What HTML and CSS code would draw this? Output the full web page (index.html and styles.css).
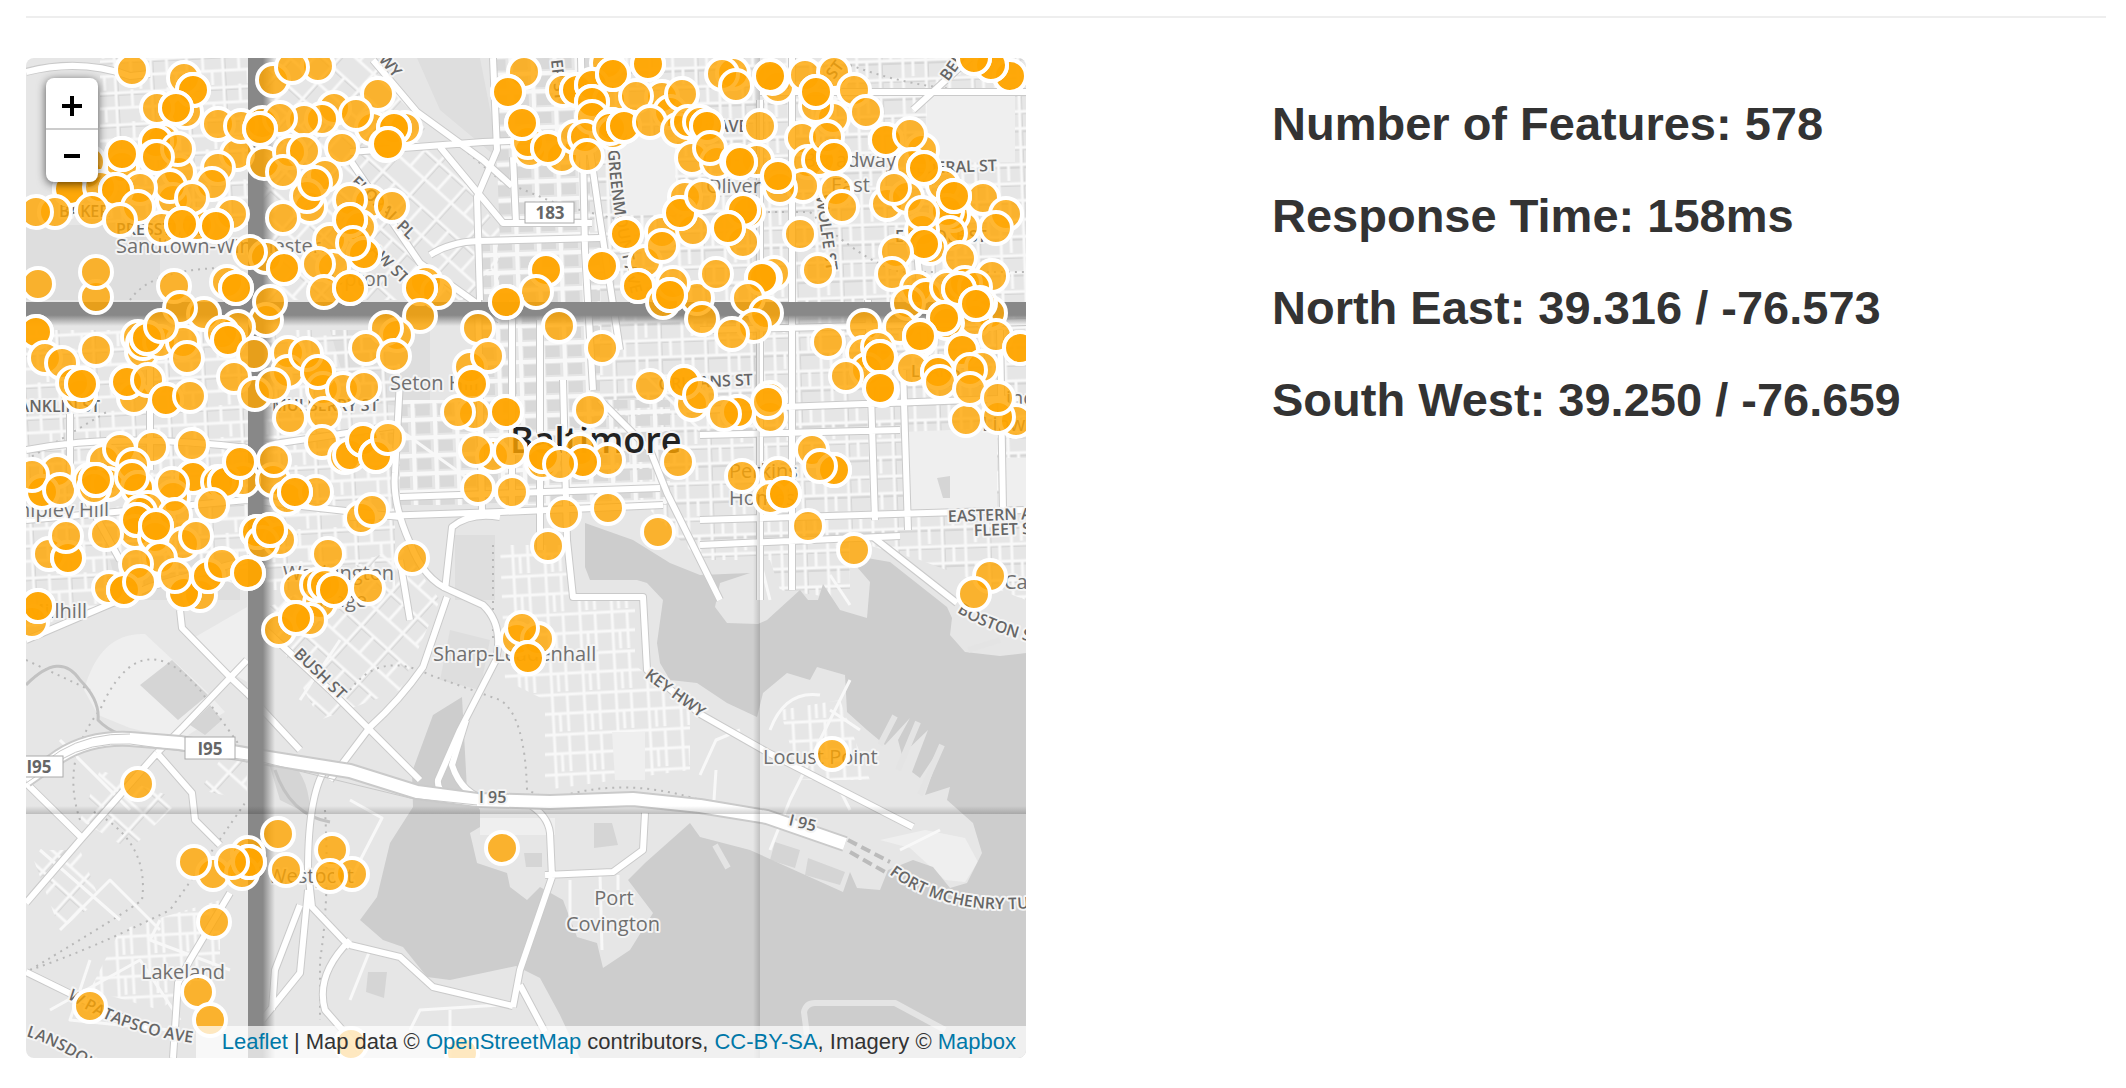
FILE: index.html
```html
<!DOCTYPE html>
<html lang="en">
<head>
<meta charset="utf-8">
<title>Baltimore features</title>
<link rel="stylesheet" href="styles.css">
</head>
<body>
<hr class="divider">
<main class="row">
  <section class="map" aria-label="Map of Baltimore">
    <svg class="map-canvas" viewBox="26 58 1000 1000" role="img" aria-label="Street map with feature markers">
      <defs>
        <pattern id="grid-east" width="46" height="36" patternUnits="userSpaceOnUse" patternTransform="rotate(-2)">
          <path class="block-edge" d="M0 4H46M4 0V36M0 22H46"/>
          <path class="street" d="M0 3H46M3 0V36M0 20H46M26 0V36M14 3V20M36 20V36"/>
        </pattern>
        <pattern id="grid-core" width="22" height="18" patternUnits="userSpaceOnUse" patternTransform="rotate(-2)">
          <rect class="block" x="5" y="5" width="14" height="11"/>
          <path class="street wide" d="M0 2H22M2 0V18"/>
        </pattern>
        <pattern id="grid-west" width="36" height="32" patternUnits="userSpaceOnUse" patternTransform="rotate(-3)">
          <path class="block-edge" d="M0 4H36M4 0V32"/>
          <path class="street" d="M0 3H36M3 0V32M0 18H36M19 0V18M28 18V32"/>
        </pattern>
        <pattern id="grid-diagonal" width="36" height="44" patternUnits="userSpaceOnUse" patternTransform="rotate(42)">
          <path class="block-edge" d="M0 4H36M4 0V44"/>
          <path class="street" d="M0 3H36M3 0V44M0 25H36M20 3V25"/>
        </pattern>
        <pattern id="grid-south" width="32" height="40" patternUnits="userSpaceOnUse" patternTransform="rotate(-3)">
          <path class="street" d="M0 3H32M3 0V40M0 22H32M18 3V40M10 22V40"/>
        </pattern>
        <linearGradient id="seam-x"><stop offset="0" stop-color="#888"/><stop offset=".55" stop-color="#888"/><stop offset="1" stop-color="#888" stop-opacity="0"/></linearGradient>
        <linearGradient id="seam-y" x2="0" y2="1"><stop offset="0" stop-color="#888"/><stop offset=".55" stop-color="#888"/><stop offset="1" stop-color="#888" stop-opacity="0"/></linearGradient>
        <linearGradient id="edge-x"><stop offset="0" stop-opacity="0"/><stop offset="1" stop-opacity=".16"/></linearGradient>
        <linearGradient id="edge-y" x2="0" y2="1"><stop offset="0" stop-opacity="0"/><stop offset="1" stop-opacity=".18"/></linearGradient>
        <g id="highways">
          <path d="M26 780L60 756Q90 737 130 739L180 743L262 757L350 771L417 792L477 800L550 802L633 799L700 806L767 817L845 844"/>
        </g>
        <g id="major-roads">
          <path d="M400 380L395 473Q392 503 410 543Q424 580 450 590L483 605Q504 625 496 660L460 730L438 780Q436 798 470 802"/>
          <path d="M466 720L452 765Q462 796 490 800M447 597L423 667Q400 700 370 727L330 780"/>
          <path d="M373 60L417 112L483 160L512 186M440 147L503 223H592M350 152L483 142L540 140"/>
          <path d="M493 58L497 150L477 197L480 300M513 157L516 223M581 58L585 250L593 390M430 255Q450 242 478 241L600 238M350 160L420 263L500 320"/>
          <path d="M563 380L567 540L573 597H643L647 670L700 714L767 752L913 827M350 517L500 512L663 505M400 497L660 488M600 400L650 450L667 493L720 600"/>
          <path d="M873 537L957 603M527 803Q548 815 550 833L552 877L520 970L513 1007M520 985L545 1032M545 875L613 872L643 850L645 813"/>
          <path d="M350 945L400 957L433 987L513 1006M157 753L82 838L26 903M26 783L82 838M157 753L192 793L195 820L220 845M230 893L190 960L178 983L173 1058M26 972L77 997L150 1030"/>
          <path d="M328 765Q308 790 308 870L312 907L350 947M308 890L300 973L262 1020M300 905L275 970L272 1010M350 940Q315 975 325 1010L360 1050"/>
          <path d="M180 610L182 628L230 677L247 693L300 750M260 625L330 690L420 780M247 660L183 727L157 753M26 640L150 587L247 560"/>
          <path d="M26 72Q80 58 130 76L150 74M26 450Q120 432 247 448L400 425M26 520L247 500L400 517M150 340V470M70 390V470L120 560"/>
          <path d="M913 110L970 58M760 92H1026M700 330L1026 322M700 410L1026 398M700 435L900 430M700 520L1026 510M700 545L900 536M792 58V590M760 100V600M868 300L875 520M903 370L908 530M1000 330L1003 510M917 250L926 360"/>
          <path d="M478 300L482 510M512 300V510M540 320V550M620 350L600 220L590 150M410 620L400 560M445 590L452 527Q470 512 500 517"/>
        </g>
        <path id="label-boston" d="M957 612Q990 634 1050 646"/>
        <path id="label-mchenry" d="M889 874Q950 920 1050 906"/>
        <path id="label-patapsco" d="M67 998Q130 1040 225 1046"/>
        <path id="label-lansdowne" d="M26 1036Q70 1050 110 1085"/>
        <path id="label-greenmount" d="M608 150Q612 220 632 296"/>
      </defs>

      <rect class="land" x="26" y="58" width="1000" height="1000"/>
      <path class="shade" d="M26 225H160V300H26ZM417 58H480L500 160L440 110ZM330 330H430V410L350 400ZM455 535H495V600H455ZM450 630L490 640L480 690L440 680ZM110 560L240 550V600H120Z"/>
      <path fill="url(#grid-west)" d="M100 58H248V225H100ZM26 330H400V500L395 510V590H262L200 575L26 630Z"/>
      <path fill="url(#grid-diagonal)" d="M262 58H373L500 230V300H262ZM262 610L400 545L440 600L400 690L320 720ZM100 770L180 800L130 850L80 820ZM30 850L80 850L100 900L60 930ZM220 760H247V800L200 790Z"/>
      <path fill="url(#grid-east)" d="M590 58H1026V600L920 560L850 540V600L780 590L770 560H700L590 450Z"/>
      <path fill="url(#grid-core)" d="M400 400H480V240H600V400H670V505H400ZM493 58H590V240H500Z"/>
      <path fill="url(#grid-south)" d="M500 545H565L575 600H635V665L690 710V770L545 790V700L505 680ZM780 710L840 700L870 780L800 780ZM120 930L220 900V960L160 1010L90 990Z"/>
      <path class="park" d="M617 137H675V215H626ZM903 432L997 428V508L908 514ZM927 97L1015 92V162L927 163ZM1005 458H1026V510H1005ZM84 690Q100 632 145 634L205 690L225 712L180 740L130 728L98 715ZM190 640L247 607V682L230 672L188 630ZM480 818H555V835H480ZM612 732H645V780H615ZM880 840L925 830L965 838L978 862L965 882L945 880L910 848Z"/>
      <path class="shade dark" d="M140 685L172 660L208 695L178 720ZM190 725L210 705L222 720L205 735ZM937 478L950 476V498H943ZM594 823H612L618 845L594 848ZM524 853H542V867H526ZM368 972H387L384 998L366 992ZM775 842L800 850L795 868L770 860ZM808 858L845 872L840 885L805 875ZM265 750Q310 760 310 815L280 800Z"/>
      <path class="water" d="M585 523L633 540L670 563L700 575L750 573L720 583L715 607L727 623L758 624L767 620L800 590L808 600H818L823 584L840 610L867 618L870 582L857 567L867 558L890 562L947 607L952 618L950 635L965 652L1000 656L1026 653V1058H580L560 1015L540 978L516 966L450 980L427 977L403 947L383 940L360 920L377 897L390 843L413 807L412 772L433 715L462 697L467 790L480 810V827L470 833L477 863L507 873L510 887L527 900L540 887L563 900L577 937L597 943L603 968L630 950L653 913L628 880L645 863L690 823L700 837L750 850L843 892L850 872L857 888L880 890L888 870L913 860L933 867L950 888L967 883L982 853L973 823L947 800L950 787L925 795L942 745L920 778L912 772L928 730L902 755L898 740L910 718L885 745L867 730L847 712L845 675L817 667L810 680L787 673L763 693L757 717L727 703L697 683L670 680L660 663L657 643L663 600L647 583L637 580L590 580L585 567Z"/>
      <path class="pier" d="M807 1035L804 1012Q806 1003 815 1003H895L945 1030M895 716L880 745M918 722L898 770M942 745L920 795M1000 640L968 650M715 845L728 868"/>
      <path class="rail" d="M80 820Q60 760 100 710Q140 620 200 690L250 760M30 970Q130 910 142 900Q150 840 90 810M30 970Q90 950 170 910Q220 840 247 800M26 660L90 690M26 460L110 410M130 300Q150 270 220 268M420 112L500 180L560 205L640 225M740 212H810Q860 260 900 272H1026M850 65Q930 95 1026 92M350 690Q380 650 430 675L500 700Q525 715 527 790L550 800Q620 775 700 800M325 810Q330 900 320 960V1020M493 545V640"/>
      <path class="creek" d="M26 685Q60 650 80 680Q100 700 98 720Q115 738 150 740M275 770Q290 815 330 822"/>
      <path class="thin-road" d="M60 740L130 810M40 850L120 920M60 930L110 880L160 930M50 1010L140 960L180 1020M160 920L150 940L230 970M90 960L70 1020L170 1030M300 700L340 640M350 800L382 818L350 880M370 950L350 1000M410 1030L420 1010L500 1005M450 1010V1058M570 880V930M600 875L602 950M618 875V890M700 775L716 740L740 730M716 770L714 800M770 730Q785 690 820 695M850 680L790 800L770 850M830 710L860 730M840 790L850 810M900 850L940 830M760 560L770 600M830 575L850 605M400 430L470 480M640 370L700 430"/>
      <use href="#major-roads" class="casing major"/>
      <use href="#major-roads" class="surface major"/>
      <use href="#highways" class="casing highway"/>
      <use href="#highways" class="surface highway"/>
      <path class="lane" d="M26 783L60 760Q90 742 130 744L262 762L410 798L477 805M26 775L60 751Q90 733 130 734"/>
      <path class="tunnel" d="M848 840L890 862M850 852L885 872"/>

      <g class="street-label">
        <text x="116" y="235">PRESSTMAN</text>
        <text x="59" y="217">BAKER</text>
        <text x="100" y="412" text-anchor="end">FRANKLIN ST</text>
        <text x="272" y="411">MULBERRY ST</text>
        <text transform="translate(293 655) rotate(44)">BUSH ST</text>
        <text transform="translate(644 677) rotate(36)">KEY HWY</text>
        <text><textPath href="#label-greenmount">GREENMOUNT AVE</textPath></text>
        <text transform="translate(551 60) rotate(84)">ER ST</text>
        <text transform="translate(378 60) rotate(48)">WY</text>
        <text transform="translate(350 183) rotate(44)">FLORAL PL</text>
        <text transform="translate(362 245) rotate(44)">LAW ST</text>
        <text transform="translate(948 82) rotate(-54)">BEL</text>
        <text transform="translate(834 80) rotate(-54)">ST</text>
        <text transform="translate(816 196) rotate(82)">WOLFE ST</text>
        <text x="718" y="132">AVE</text>
        <text transform="translate(997 171) rotate(-2)" text-anchor="end">FEDERAL ST</text>
        <text transform="translate(753 385) rotate(-3)" text-anchor="end">ORLEANS ST</text>
        <text x="911" y="377">LEANS</text>
        <text x="895" y="242">E BIDDLE ST</text>
        <text transform="translate(948 522) rotate(-2)">EASTERN AVE</text>
        <text transform="translate(974 536) rotate(-2)">FLEET ST</text>
        <text><textPath href="#label-boston">BOSTON ST</textPath></text>
        <text><textPath href="#label-mchenry">FORT MCHENRY TUNNEL</textPath></text>
        <text><textPath href="#label-patapsco">W PATAPSCO AVE</textPath></text>
        <text><textPath href="#label-lansdowne">LANSDOWNE</textPath></text>
        <text x="479" y="803">I 95</text>
        <text transform="translate(788 825) rotate(14)">I 95</text>
      </g>
      <g class="place-label">
        <text x="116" y="253">Sandtown-Winchester</text>
        <text x="388" y="286" text-anchor="end">Upton</text>
        <text x="390" y="390">Seton Hill</text>
        <text x="109" y="517" text-anchor="end">Shipley Hill</text>
        <text x="87" y="618" text-anchor="end">Millhill</text>
        <text x="283" y="580">Washington</text>
        <text x="367" y="607" text-anchor="end">Village</text>
        <text x="433" y="661">Sharp-Leadenhall</text>
        <text x="141" y="979">Lakeland</text>
        <text x="268" y="883">Westport</text>
        <text x="614" y="905" text-anchor="middle">Port</text>
        <text x="613" y="931" text-anchor="middle">Covington</text>
        <text x="763" y="764">Locust Point</text>
        <text x="729" y="478">Perkins</text>
        <text x="729" y="505">Homes</text>
        <text x="1004" y="589">Canton</text>
        <text x="761" y="193" text-anchor="end">Oliver</text>
        <text x="896" y="167" text-anchor="end">Broadway</text>
        <text x="870" y="192" text-anchor="end">East</text>
        <text x="1006" y="405">inc</text>
        <text x="982" y="431">Linw</text>
      </g>
      <text class="city-label" x="510" y="453">Baltimore</text>
      <g class="shield">
        <rect x="525" y="202" width="49" height="21"/><text x="550" y="219">183</text>
        <rect x="185" y="737" width="50" height="22"/><text x="210" y="755">I95</text>
        <rect x="14" y="756" width="49" height="21"/><text x="39" y="773">I95</text>
      </g>

      <rect x="248" y="58" width="27" height="1000" fill="url(#seam-x)"/>
      <rect x="26" y="302" width="1000" height="24" fill="url(#seam-y)"/>
      <rect x="753" y="58" width="7" height="1000" fill="url(#edge-x)"/>
      <rect x="26" y="806" width="1000" height="8" fill="url(#edge-y)"/>
      <g class="features" id="features"></g>
    </svg>
    <div class="zoom-control">
      <button type="button" class="zoom-button" aria-label="Zoom in"><svg viewBox="0 0 20 20"><path d="M0 10H20M10 0V20"/></svg></button>
      <button type="button" class="zoom-button" aria-label="Zoom out"><svg viewBox="0 0 20 20"><path d="M2 10H18"/></svg></button>
    </div>
    <p class="attribution"><a href="#">Leaflet</a> | Map data © <a href="#">OpenStreetMap</a> contributors, <a href="#">CC-BY-SA</a>, Imagery © <a href="#">Mapbox</a></p>
  </section>
  <section class="stats">
    <h3>Number of Features: 578</h3>
    <h3>Response Time: 158ms</h3>
    <h3>North East: 39.316 / -76.573</h3>
    <h3>South West: 39.250 / -76.659</h3>
  </section>
</main>
<script src="features.js"></script>
</body>
</html>
```
FILE: styles.css
```css
body {
  margin: 0;
  padding: 16px 20px 30px 26px;
  background: #fff;
  color: #333;
  font-family: "Liberation Sans", Arial, sans-serif;
}

.divider {
  height: 2px;
  margin: 0 0 40px;
  border: 0;
  background: #eee;
}

.row {
  display: grid;
  grid-template-columns: minmax(0, 1fr) minmax(0, 1fr);
  column-gap: 80px;
}

.map {
  position: relative;
  overflow: hidden;
  border-radius: 8px;
}

.map-canvas { display: block; width: 100%; }

.land { fill: #e6e6e6; }
.park { fill: #efefef; }
.shade { fill: #dedede; }
.shade.dark { fill: #d5d5d5; }
.block { fill: #d9d9d9; }
.water { fill: #cdcdcd; }
.block-edge { fill: none; stroke: #d6d6d6; stroke-width: 4; }
.street { fill: none; stroke: #f8f8f8; stroke-width: 3; }
.street.wide { stroke-width: 4; }

.pier, .rail, .creek, .thin-road, .lane, .tunnel, .casing, .surface {
  fill: none;
  stroke-linejoin: round;
}
.pier { stroke: #e4e4e4; stroke-width: 6; }
.rail { stroke: #b8b8b8; stroke-width: 2; stroke-dasharray: 2 5; }
.creek { stroke: #c2c2c2; stroke-width: 3; }
.thin-road { stroke: #f8f8f8; stroke-width: 3; }
.casing { stroke: #cacaca; }
.surface { stroke: #fff; }
.casing.major { stroke-width: 8; }
.surface.major { stroke-width: 6; }
.casing.highway { stroke-width: 16; }
.surface.highway { stroke-width: 12; }
.lane { stroke: #c8c8c8; stroke-width: 1; }
.tunnel { stroke: #bbb; stroke-width: 4; stroke-dasharray: 10 5; }

.street-label, .place-label, .city-label {
  font-family: "Open Sans", "Noto Sans", sans-serif;
  paint-order: stroke;
  stroke: #f4f4f4;
  stroke-width: 4px;
  stroke-linejoin: round;
}
.street-label { font-size: 16px; font-weight: 600; fill: #666; }
.place-label { font-size: 20px; fill: #707070; }
.city-label { font-size: 36px; font-weight: 600; fill: #222; }

.shield rect { fill: #fff; stroke: #aaa; stroke-width: 1; }
.shield text {
  font: 700 17px "Open Sans", "Noto Sans", sans-serif;
  fill: #666;
  text-anchor: middle;
}

.features circle {
  fill: #ffa500;
  fill-opacity: .8;
  stroke: #fff;
  stroke-width: 4;
}

.zoom-control {
  position: absolute;
  top: 20px;
  left: 20px;
  display: flex;
  flex-direction: column;
  border-radius: 8px;
  background: #fff;
  box-shadow: 0 2px 10px rgba(0, 0, 0, .65);
}
.zoom-button {
  display: flex;
  align-items: center;
  justify-content: center;
  width: 52px;
  height: 52px;
  padding: 0;
  border: 0;
  background: none;
  cursor: pointer;
}
.zoom-button:first-child { border-bottom: 2px solid #ccc; padding-top: 6px; }
.zoom-button svg { width: 20px; height: 20px; fill: none; stroke: #000; stroke-width: 4; }

.attribution {
  position: absolute;
  right: 0;
  bottom: 0;
  margin: 0;
  padding: 0 10px 0 26px;
  background: rgba(255, 255, 255, .7);
  font-size: 22px;
  line-height: 32px;
  white-space: nowrap;
}
.attribution a { color: #0078a8; text-decoration: none; }

.stats {
  display: flex;
  flex-direction: column;
  gap: 40px;
  padding: 40px 0 0 166px;
}
.stats h3 {
  margin: 0;
  font-size: 47px;
  font-weight: 700;
  line-height: 52px;
}
```
FILE: features.js
```js
// Each group lists its features from a local origin, in thirds of a map unit.
// A third number is how many features share that exact place.
const groups = [
  { x: 0, y: 40, points: [
    [396,89],[551,114],[558,215],[580,150,2],[472,204],[527,203,2],[711,341],[653,251],[724,257],[785,250],[820,120],[953,78],[875,82],[1002,204],[965,238],[911,239],[840,234],[779,268,2],
    [793,369],[870,335],[911,334],[850,396],[1026,324],[975,406],[930,502],[922,468],[946,430],[849,534],
    [262,400],[268,365],[365,380],[365,341,2],[490,300],[467,305,2],[655,384],[538,396],[465,350],[533,326],[472,352],[590,555],[520,480],[510,438],[635,432],[575,474],
    [210,448,2],[300,440],[420,443],[347,449,2],[275,509],[165,516],[107,516],[415,502],[360,539],[487,563],[546,551,2],[697,521],[648,558,2],
    [798,652],[749,636],[852,684,2],[990,600],[1000,680],[955,671],[971,755],[287,770],[287,696],[114,732],[521,737],[682,725],[707,743,2],
    [613,822],[540,803],[797,840],[809,785],[107,875,2],[413,890],[425,935],[430,910],[480,905],[550,905],[440,895,2],[484,857],
    [715,860],[665,880],[683,899,2],[562,953],[135,955],[185,970],[288,930],[762,941],[865,940],[865,995],[955,996],[917,942]] },
  { x: 350, y: 40, points: [
    [521,96],[474,156,2],[84,161],[65,265],[18,222],[165,265],[132,263,2],[108,315],[113,311,2],[540,332],[535,305],[515,250,2],[635,350],[594,324,2],
    [640,150],[680,150,2],[770,70],[893,72,2],[725,135,2],[780,180],[725,185,2],[790,101,2],[675,290],[725,230],[705,290],[711,348],[785,255,2],[790,280],[780,263],[935,170],[857,167],[822,258,2],[960,215],[900,245],[995,161],
    [985,270],[1015,247],[1025,354],[60,485],[126,497],[0,480],[30,560],[0,540,2],[42,642,2],[10,610],[0,745,2],[228,725],[265,755],[211,744,2],[210,828],
    [588,689,2],[558,755],[468,785,2],[755,677,2],[140,885],[108,863],[48,923],[131,947],[383,864],[360,980],[413,947],[365,1030],[628,858],[756,923],
    [828,581,2],[886,665],[936,575],[936,618],[863,738,2],[1040,775],[940,785],[970,730],[960,765,2],[1005,470],[1030,570],[990,518,2]] },
  { x: 700, y: 40, points: [
    [100,100],[65,102],[108,137],[235,140],[215,115],[210,108,2],[315,105],[403,96],[400,235],[348,198],[348,155,2],[461,150],[497,216],[180,257],
    [305,294],[325,365],[358,360],[380,291],[401,350,2],[0,245],[20,258,2],[50,365],[30,324],[170,360],[110,362],[121,365,2],[310,437],[240,445],[235,407,2],[408,450],[425,502],
    [929,107,2],[872,76,2],[822,55,2],[558,300,2],[665,330],[630,281],[635,375],[730,435],[672,384,2],[560,492],[620,470],[582,443],[848,473],[918,521],[888,563],
    [790,560],[760,525],[740,512],[750,580],[762,467,2],[665,570],[665,518],[690,625],[672,612,2],[587,635],[780,655],[575,702],
    [650,745],[625,790],[678,768],[877,708],[740,740],[795,730],[825,740],[870,820],[825,840],[778,748,2],[840,790],[829,791,2],[600,860],[740,850],[732,833,2],[660,900],[660,888,2],[888,888],
    [5,468],[145,515],[128,510,2],[130,606],[84,563,2],[300,582],[353,690],[47,702],[222,700],[195,715],[186,714,2],[144,773],[197,820],[161,857],[96,881],[5,838],
    [383,905],[491,857],[490,938],[533,920],[500,990],[539,950,2],[437,1008],[636,984],[785,930,2],[845,980],[810,990],[714,995,2],[960,923,2]] },
  { x: 0, y: 380, points: [
    [240,45],[220,10],[245,12,2],[402,55],[380,5,2],[443,0],[498,60,2],[570,47],[702,-8],[765,42],[820,15],[970,28],[955,-24],[1030,28],[870,115],[972,101],[965,186],[1036,230],
    [311,243],[360,208],[456,202],[575,196],[172,274],[125,336,2],[95,286],[180,330],[270,300],[325,312],[282,324],[288,300,2],[400,255],[413,325,2],[396,290],[580,290,2],[520,350],[515,312],
    [730,300],[655,305],[676,306,2],[719,246,2],[820,300],[822,240],[635,374],[860,355],[948,335],[884,336,2],[445,385],[420,395],[525,405],[405,455],[410,420,2],[465,470],[467,438,2],
    [549,492],[588,468],[317,463],[148,522],[203,534,2],[198,468],[770,455,2],[840,480],[785,488],[809,450,2],[480,535],[408,552],[327,624],[371,630,2],[420,605],[600,645],[551,638,2],[526,588],
    [625,588,2],[666,552],[745,580,2],[95,727],[114,677,2],[983,522],[895,623],[960,670],[950,615],[975,615],[1001,629,2],[837,750],[930,720],[887,714,2]] },
  { x: 350, y: 380, points: [
    [42,22],[0,225],[40,180,2],[77,228,2],[114,173],[372,102],[324,96],[468,96,2],[367,12],[720,89],[430,227],[378,210],[480,212],[575,250],[580,228,2],[690,210],[775,239],[698,245,2],[629,251],
    [383,324],[486,335],[642,401],[774,383],[593,497],[923,455],[984,245],[899,17],[1025,72],[1001,5,2],[33,413],[65,390],[185,533],[54,623],[500,778],[563,778],[516,744],[533,833,2]] },
  { x: 700, y: 380, points: [
    [545,30],[540,25,2],[0,45],[115,96,2],[71,102],[210,110],[210,55],[203,65],[797,119],[948,124],[893,110],[720,6],[811,28],[893,54],
    [337,210],[402,270,2],[360,257],[126,288],[234,282],[210,353],[252,341,2],[324,438],[461,509],[870,587],[822,641]] },
  { x: 0, y: 720, points: [
    [413,192],[833,341],[640,462],[745,400],[725,460],[748,425,2],[582,426],[695,425],[857,449],[995,390],[1056,462],[989,467],[642,605],[593,815],[270,857],[630,900],[1053,972]] },
  { x: 350, y: 720, points: [[455,384],[336,998]] },
  { x: 700, y: 720, points: [[396,102]] }
];

const layer = document.getElementById("features");
for (const group of groups) {
  for (const [x, y, count = 1] of group.points) {
    for (let i = 0; i < count; i++) {
      const marker = document.createElementNS("http://www.w3.org/2000/svg", "circle");
      marker.setAttribute("cx", Math.round(group.x + x / 3));
      marker.setAttribute("cy", Math.round(group.y + y / 3));
      marker.setAttribute("r", 16);
      layer.appendChild(marker);
    }
  }
}
```
